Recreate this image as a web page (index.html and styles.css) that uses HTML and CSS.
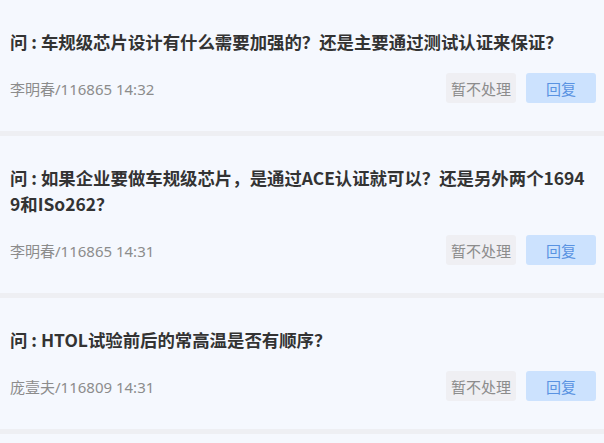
FILE: index.html
```html
<!DOCTYPE html>
<html lang="zh-CN">
<head>
  <meta charset="UTF-8" />
  <link rel="stylesheet" href="styles.css">
</head>
<body>
  <div class="list">
    <div class="item">
      <div class="question">问 : 车规级芯片设计有什么需要加强的？还是主要通过测试认证来保证？</div>
      <div class="meta-row">
        <span class="meta">李明春/116865 14:32</span>
        <div class="actions">
          <button class="btn btn-ignore">暂不处理</button>
          <button class="btn btn-reply">回复</button>
        </div>
      </div>
    </div>

    <div class="item">
      <div class="question">问 : 如果企业要做车规级芯片，是通过ACE认证就可以？还是另外两个16949和ISo262？</div>
      <div class="meta-row">
        <span class="meta">李明春/116865 14:31</span>
        <div class="actions">
          <button class="btn btn-ignore">暂不处理</button>
          <button class="btn btn-reply">回复</button>
        </div>
      </div>
    </div>

    <div class="item">
      <div class="question">问 : HTOL试验前后的常高温是否有顺序？</div>
      <div class="meta-row">
        <span class="meta">庞壹夫/116809 14:31</span>
        <div class="actions">
          <button class="btn btn-ignore">暂不处理</button>
          <button class="btn btn-reply">回复</button>
        </div>
      </div>
    </div>

    <div class="item"></div>
  </div>
</body>
</html>
```

FILE: styles.css
```css
body {
  font-family: "Noto Sans CJK SC", "Noto Sans", sans-serif;
  margin: 0;
  background-color: #f5f8fe;
}

.list {
  display: flex;
  flex-direction: column;
  gap: 5px;
  background: #eeeff3;
}

.item {
  background: #f5f8fe;
  padding: 29px 8px 28px 10px;
}

.question {
  font-size: 17.4px;
  font-weight: 700;
  line-height: 26px;
  color: #333;
  word-break: break-all;
  margin-right: 8px;
  margin-bottom: 18px;
}

.meta-row {
  display: flex;
  align-items: center;
  justify-content: space-between;
}

.meta {
  font-family: "Noto Sans", "Noto Sans CJK SC", sans-serif;
  font-size: 15px;
  color: #8c8c8c;
}

.actions {
  display: flex;
  gap: 10px;
}

.btn {
  width: 70px;
  height: 30px;
  border: none;
  border-radius: 3px;
  font-family: inherit;
  font-size: 15px;
  padding: 0;
  cursor: pointer;
}

.btn-ignore {
  background: #efeff3;
  color: #8c8c8c;
}

.btn-reply {
  background: #cce2fe;
  color: #5a93e2;
}
```
